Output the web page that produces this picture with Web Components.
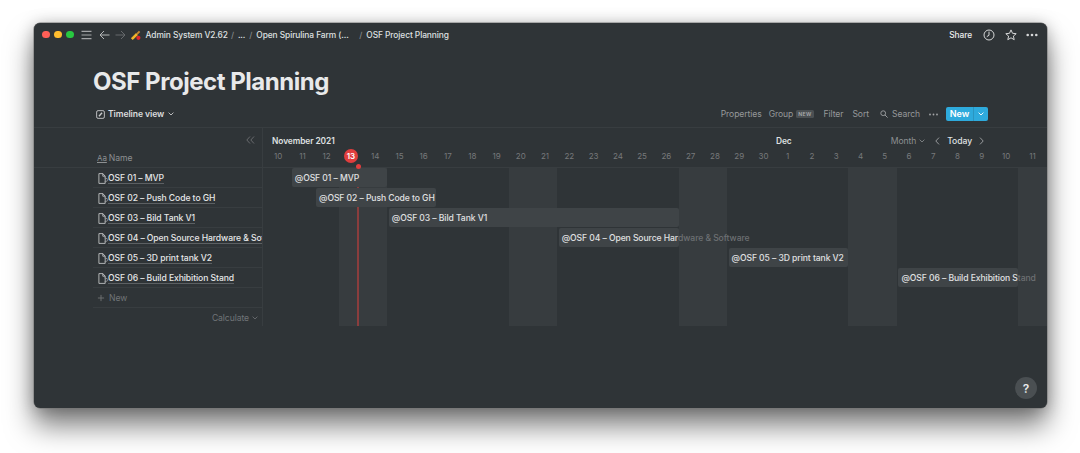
<!DOCTYPE html>
<html>
<head>
<meta charset="utf-8">
<title>OSF Project Planning</title>
<style>
  html, body { margin: 0; background: #fff; }
  body {
    padding: 23px 33px 45px 34px;
    font-family: Inter, "Liberation Sans", sans-serif;
    height: 453px;
    box-sizing: border-box;
    overflow: hidden;
  }
</style>
</head>
<body>
<app-window>
  <top-bar slot="bar"></top-bar>
  <page-title>OSF Project Planning</page-title>
  <db-toolbar></db-toolbar>
  <db-timeline></db-timeline>
  <help-button slot="help"></help-button>
</app-window>

<script>
/**
 * Outer macOS style window.
 */
customElements.define('app-window',
  class extends HTMLElement {
    constructor () {
      super()
      this.attachShadow({ mode: 'open' }).innerHTML = `
        <style>
          :host {
            display: block;
            height: 385px;
            position: relative;
            background: #2f3437;
            border-radius: 6px;
            box-shadow: 0 0 0 .5px #777, 0 18px 28px rgba(0,0,0,.5), 0 1px 16px rgba(0,0,0,.25);
            color: #e6e7e8;
            overflow: hidden;
          }
          .help { position: absolute; right: 10px; bottom: 9px; }
        </style>
        <slot name="bar"></slot>
        <slot></slot>
        <div class="help"><slot name="help"></slot></div>
      `
    }
  }
)

/**
 * Title bar with traffic lights and breadcrumbs.
 */
customElements.define('top-bar',
  class extends HTMLElement {
    constructor () {
      super()
      this.attachShadow({ mode: 'open' }).innerHTML = `
        <style>
          :host {
            display: flex;
            align-items: center;
            height: 23px;
            padding: 0 9px 0 8px;
            font-size: 8.4px;
            letter-spacing: -.08px;
            font-weight: 500;
            color: #dfe0e1;
          }
          .lights { display: flex; gap: 4.5px; margin-right: 7px; }
          .lights i { width: 7.5px; height: 7.5px; border-radius: 50%; }
          svg { display: block; flex: none; }
          .crumbs { display: flex; align-items: center; }
          .sep { color: #85888a; }
          .right { margin-left: auto; display: flex; align-items: center; }
        </style>
        <div class="lights">
          <i style="background:#ff5f57"></i><i style="background:#febc2e"></i><i style="background:#28c840"></i>
        </div>
        <svg width="11" height="10" viewBox="0 0 11 10" fill="none" stroke="#a3a5a7" stroke-width="1.1"><path d="M.5 1.4h10M.5 5h10M.5 8.6h10"/></svg>
        <svg style="margin-left:7px" width="11" height="10" viewBox="0 0 11 10" fill="none" stroke="#b5b7b8" stroke-width="1"><path d="M10.500 5H1M5 1 1 5l4 4"/></svg>
        <svg style="margin-left:5px" width="11" height="10" viewBox="0 0 11 10" fill="none" stroke="#66696c" stroke-width="1"><path d="M.5 5H10M6 1l4 4-4 4"/></svg>
        <svg style="margin-left:4px" width="13" height="12" viewBox="0 0 13 12" fill="none"><path d="M1.800 10.200 7 5" stroke="#f0b429" stroke-width="2.600"/><path d="M7 5 9.600 2.400" stroke="#c98a2e" stroke-width="1.800"/><circle cx="8.400" cy="8.800" r="2.100" fill="#e0262b"/></svg>
        <div class="crumbs" style="margin-left:3px">
          <span>Admin System V2.62</span>
          <span class="sep" style="margin:0 4px 0 3px">/</span>
          <span>...</span>
          <span class="sep" style="margin:0 4px">/</span>
          <span style="width:103px">Open Spirulina Farm (...</span>
          <span class="sep" style="margin-right:4px">/</span>
          <span>OSF Project Planning</span>
        </div>
        <div class="right">
          <span style="color:#eceded">Share</span>
          <svg style="margin-left:11px" width="12" height="12" viewBox="0 0 12 12" fill="none" stroke="#d6d7d8" stroke-width="1"><circle cx="6" cy="6" r="5"/><path d="M6 2.600V6.300L3.800 7.600"/></svg>
          <svg style="margin-left:10px" width="12" height="12" viewBox="0 0 12 12" fill="none" stroke="#d6d7d8" stroke-width="1"><path d="m6 .9 1.500 3.400 3.700.4-2.800 2.400.8 3.600L6 8.800l-3.200 1.900.8-3.600L.8 4.700l3.700-.4Z"/></svg>
          <svg style="margin-left:9px" width="12" height="4" viewBox="0 0 12 4" fill="#d6d7d8"><circle cx="1.700" cy="2" r="1.300"/><circle cx="6" cy="2" r="1.300"/><circle cx="10.300" cy="2" r="1.300"/></svg>
        </div>
      `
    }
  }
)

/**
 * Big page heading.
 */
customElements.define('page-title',
  class extends HTMLElement {
    constructor () {
      super()
      this.attachShadow({ mode: 'open' }).innerHTML = `
        <style>
          :host {
            display: block;
            padding: 21px 0 0 59px;
            height: 53px;
            box-sizing: border-box;
            font-size: 24px;
            letter-spacing: -.47px;
            line-height: 30px;
            font-weight: 700;
            color: #e8e9ea;
          }
        </style>
        <slot></slot>
      `
    }
  }
)

/**
 * Row with the view name and the database actions.
 */
customElements.define('db-toolbar',
  class extends HTMLElement {
    constructor () {
      super()
      this.attachShadow({ mode: 'open' }).innerHTML = `
        <style>
          :host {
            display: flex;
            align-items: center;
            height: 26px;
            margin: 2px 59px 0 62px;
            font-size: 8.6px;
            letter-spacing: -.08px;
            color: #96989a;
            font-weight: 400;
          }
          svg { display: block; flex: none; }
          .view { display: flex; align-items: center; color: #dcdddf; font-weight: 600; }
          .actions { margin-left: auto; display: flex; align-items: center; }
          .tag {
            margin-left: 3px; font-size: 5.200px; font-weight: 600; letter-spacing: .3px; padding: 1px 2px;
            background: #4b5053; color: #a9abad; border-radius: 1.500px; line-height: 6px;
          }
          .new {
            margin-left: 8px; display: flex; align-items: stretch; height: 14px; width: 42px; border-radius: 2px;
            background: #2eaadc; color: #fff; font-weight: 600; font-size: 9px;
          }
          .new b { font-weight: 600; width: 27px; text-align: center; line-height: 14px; border-right: 1px solid #2a95c0; }
          .new span { flex: 1; display: flex; align-items: center; justify-content: center; }
        </style>
        <div class="view">
          <svg width="9" height="9" viewBox="0 0 10 10" fill="none" stroke="#c9cacc" stroke-width="1"><rect x=".7" y=".7" width="8.600" height="8.600" rx="1.600"/><path d="M3.300 6.900 6.700 3.100" stroke-width="1.500"/></svg>
          <span style="margin-left:3px">Timeline view</span>
          <svg style="margin-left:4px" width="6" height="4" viewBox="0 0 6 4" fill="none" stroke="#c9cacc" stroke-width=".9"><path d="m.6.6 2.400 2.400L5.400.6"/></svg>
        </div>
        <div class="actions">
          <span>Properties</span>
          <span style="margin-left:7px">Group</span><span class="tag">NEW</span>
          <span style="margin-left:10px">Filter</span>
          <span style="margin-left:9px">Sort</span>
          <svg style="margin-left:11px" width="8" height="8" viewBox="0 0 8 8" fill="none" stroke="#96989a" stroke-width="1"><circle cx="3.200" cy="3.200" r="2.400"/><path d="m5 5 2.600 2.600"/></svg>
          <span style="margin-left:4px">Search</span>
          <svg style="margin-left:9px" width="9" height="3" viewBox="0 0 9 3" fill="#a3a5a7"><circle cx="1" cy="1.500" r=".9"/><circle cx="4.500" cy="1.500" r=".9"/><circle cx="8" cy="1.500" r=".9"/></svg>
          <div class="new"><b>New</b><span><svg width="6" height="4" viewBox="0 0 6 4" fill="none" stroke="#fff" stroke-width=".9"><path d="m.6.6 2.400 2.400L5.400.6"/></svg></span></div>
        </div>
      `
    }
  }
)

const rows = [
  { name: 'OSF 01 – MVP', start: 1, end: 5, inside: 'OSF 01 – MVP', outside: '' },
  { name: 'OSF 02 – Push Code to GH', start: 2, end: 7, inside: 'OSF 02 – Push Code to GH', outside: '' },
  { name: 'OSF 03 – Bild Tank V1', start: 5, end: 17, inside: 'OSF 03 – Bild Tank V1', outside: '' },
  { name: 'OSF 04 – Open Source Hardware & Software', start: 12, end: 17, inside: 'OSF 04 – Open Source Har', outside: 'dware & Software' },
  { name: 'OSF 05 – 3D print tank V2', start: 19, end: 24, inside: 'OSF 05 – 3D print tank V2', outside: '' },
  { name: 'OSF 06 – Build Exhibition Stand', start: 26, end: 31, inside: 'OSF 06 – Build Exhibition S', outside: 'tand' }
]

// Day labels from the 10th of November, 32 columns in total.
const days = []
for (let i = 10; i <= 30; i++) days.push(i)
for (let i = 1; i <= 11; i++) days.push(i)

const weekends = [[3, 5], [10, 12], [17, 19], [24, 26], [31, 32]]

/**
 * The timeline with a name table on the left and the bars on the right.
 */
customElements.define('db-timeline',
  class extends HTMLElement {
    constructor () {
      super()
      const pageIcon = `<svg width="11" height="11" viewBox="0 0 11 11" fill="none" stroke="#cfd0d2" stroke-width=".8"><path d="M.9.6h3.900L7.200 3.200v7.200H.9Z"/><path d="M4.800.6v2.600h2.400"/><path d="M6.600 4.800c2 .6 3.400 1.400 3.600 2M6.600 8.800c2-.4 3.400-1.200 3.600-2" stroke="#a0a2a4"/></svg>`
      this.attachShadow({ mode: 'open' }).innerHTML = `
        <style>
          :host {
            display: block;
            height: 198px;
            border-top: 1px solid #383d40;
            position: relative;
            font-size: 8.6px;
            letter-spacing: -.08px;
            --track: repeat(31, 24.27px) 1fr;
          }
          .top { display: grid; grid-template-columns: 229px 1fr; height: 39px; border-bottom: 1px solid #383d40; }
          .names-head {
            margin-left: 59px; border-right: 1px solid #383d40; position: relative;
            display: flex; align-items: flex-end; padding: 0 0 4px 4px; gap: 2px;
            color: #8d9092;
          }
          .aa { font-size: 8px; text-decoration: underline; }
          .collapse { position: absolute; right: 7px; top: 8px; display: block; }
          .head { padding-left: 3px; }
          .months { display: flex; align-items: center; height: 25px; font-weight: 600; color: #dfe0e1; }
          .months > span { font-size: 8.4px; }
          .months .dec { position: absolute; left: 742px; }
          .months .ctl { margin-left: auto; margin-right: 63px; display: flex; align-items: center; font-weight: 400; color: #8d9092; }
          .days { display: grid; grid-template-columns: var(--track); font-size: 8px; letter-spacing: 0; color: #77797b; height: 14px; line-height: 14px; text-align: center; margin-top: -4px; }
          .today { justify-self: center; width: 14px; height: 14px; border-radius: 50%; background: #e03e3e; color: #fff; font-weight: 600; }
          .body { display: grid; grid-template-columns: 229px 1fr; height: 158px; }
          .names { margin-left: 59px; border-right: 1px solid #383d40; overflow: hidden; }
          .row {
            height: 20px; box-sizing: border-box; border-bottom: 1px solid #383d40;
            display: flex; align-items: center; padding: 1px 0 0 5px; white-space: nowrap;
            font-weight: 500; color: #e6e7e8;
          }
          .row svg { flex: none; }
          .row span { border-bottom: 1px solid #5c6063; line-height: 10px; margin-left: -1px; }
          .add { color: #717477; font-weight: 400; padding-left: 4px; }
          .calc { height: 18px; border: 0; justify-content: flex-end; padding-right: 4px; color: #717477; font-weight: 400; gap: 3px; }
          .chart {
            display: grid; grid-template-columns: var(--track); grid-template-rows: repeat(6, 20px) 1fr;
            padding-left: 3px; position: relative;
          }
          .band { grid-row: 1 / -1; background: #373c3f; }
          .bar {
            height: 19px; align-self: start; border-radius: 2px; background: #3f4447; box-sizing: border-box;
            margin-left: 1.500px; padding-left: 3px; display: flex; align-items: center; white-space: pre; z-index: 2;
            font-weight: 500; color: #e0e1e2;
          }
          .over { color: #6d7073; }
          .line { position: absolute; left: 94px; top: 0; bottom: 0; width: 2px; background: #8a3d3d; z-index: 1; }
          .dot { position: absolute; left: 92.5px; top: -4px; width: 5px; height: 5px; border-radius: 50%; background: #e03e3e; z-index: 3; }
        </style>
        <div class="top">
          <div class="names-head">
            <svg class="collapse" width="9" height="8" viewBox="0 0 9 8" fill="none" stroke="#6f7275" stroke-width=".9"><path d="M4 .5.8 4 4 7.500M8 .5 4.800 4 8 7.500"/></svg>
            <span class="aa">Aa</span><span>Name</span>
          </div>
          <div class="head">
            <div class="months">
              <span style="margin-left:6px">November 2021</span>
              <span class="dec">Dec</span>
              <div class="ctl">
                <span>Month</span>
                <svg style="margin-left:3px" width="6" height="4" viewBox="0 0 6 4" fill="none" stroke="#8d9092" stroke-width=".8"><path d="m.6.6 2.400 2.400L5.400.6"/></svg>
                <svg style="margin-left:10px" width="5" height="8" viewBox="0 0 5 8" fill="none" stroke="#a3a5a7" stroke-width=".9"><path d="M4 .6.8 4 4 7.400"/></svg>
                <span style="margin-left:7px;color:#dfe0e1;font-weight:500">Today</span>
                <svg style="margin-left:7px" width="5" height="8" viewBox="0 0 5 8" fill="none" stroke="#a3a5a7" stroke-width=".9"><path d="M1 .6 4.200 4 1 7.400"/></svg>
              </div>
            </div>
            <div class="days">${days.map((d, i) => `<span class="${i === 3 ? 'today' : ''}">${d}</span>`).join('')}</div>
          </div>
        </div>
        <div class="body">
          <div class="names">
            ${rows.map(r => `<div class="row">${pageIcon}<span>${r.name.replace('&', '&amp;')}</span></div>`).join('')}
            <div class="row add"><svg width="8" height="8" viewBox="0 0 9 9" stroke="#717477" stroke-width="1"><path d="M4.500 1v7M1 4.500h7"/></svg><span style="border:0;margin-left:4px">New</span></div>
            <div class="row calc">Calculate<svg width="6" height="4" viewBox="0 0 6 4" fill="none" stroke="#717477" stroke-width=".8"><path d="m.6.6 2.400 2.400L5.400.6"/></svg></div>
          </div>
          <div class="chart">
            ${weekends.map(w => `<div class="band" style="grid-column:${w[0] + 1} / ${w[1] + 1}"></div>`).join('')}
            ${rows.map((r, i) => `<div class="bar" style="grid-row:${i + 1};grid-column:${r.start + 1} / ${r.end + 1}">@${r.inside}<span class="over">${r.outside.replace('&', '&amp;')}</span></div>`).join('')}
            <div class="line"></div>
            <div class="dot"></div>
          </div>
        </div>
      `
    }
  }
)

/**
 * Round help button in the corner.
 */
customElements.define('help-button',
  class extends HTMLElement {
    constructor () {
      super()
      this.attachShadow({ mode: 'open' }).innerHTML = `
        <style>
          :host {
            display: flex; align-items: center; justify-content: center;
            width: 22px; height: 22px; border-radius: 50%;
            background: #4a4f52; color: #e8e9ea; font-size: 12px; font-weight: 600;
          }
        </style>
        ?
      `
    }
  }
)
</script>
</body>
</html>
